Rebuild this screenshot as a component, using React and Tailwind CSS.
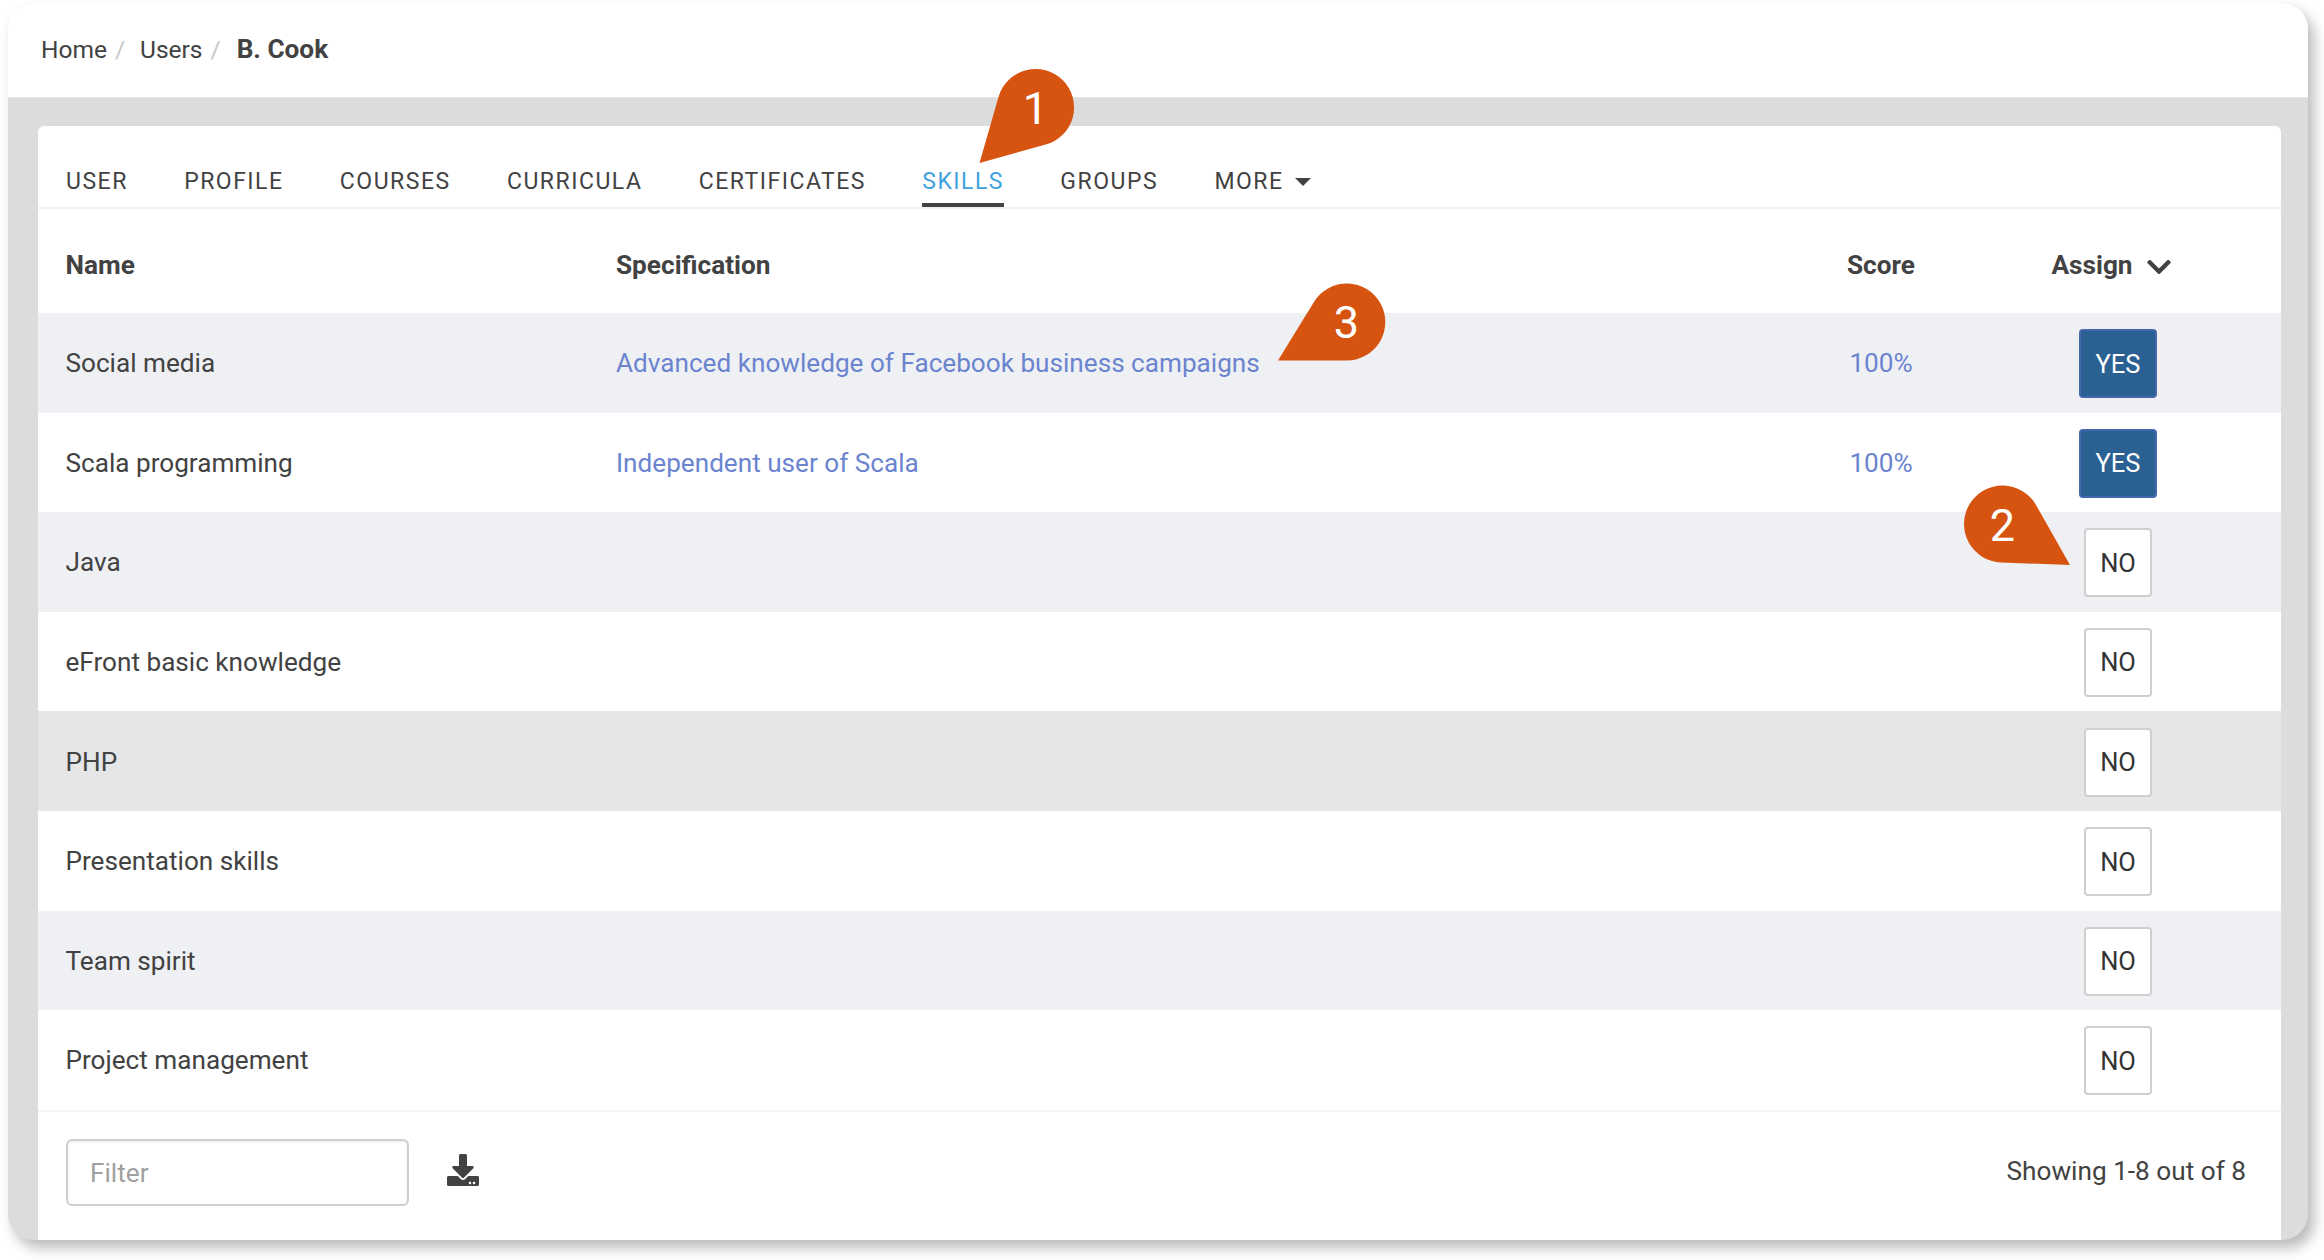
import { FaDownload, FaChevronDown } from 'react-icons/fa';

const tabs = ['USER', 'PROFILE', 'COURSES', 'CURRICULA', 'CERTIFICATES', 'SKILLS', 'GROUPS'];

const rows = [
  { name: 'Social media', spec: 'Advanced knowledge of Facebook business campaigns', score: '100%', assigned: true, bg: 'bg-[#eff0f4]' },
  { name: 'Scala programming', spec: 'Independent user of Scala', score: '100%', assigned: true },
  { name: 'Java', bg: 'bg-[#eff0f4]' },
  { name: 'eFront basic knowledge' },
  { name: 'PHP', bg: 'bg-[#e5e6e8]' },
  { name: 'Presentation skills' },
  { name: 'Team spirit', bg: 'bg-[#eff0f4]' },
  { name: 'Project management' },
];

function Pin({ className, d, label, x, y, w, h }) {
  return (
    <svg className={`absolute ${className}`} width={w} height={h} viewBox={`0 0 ${w} ${h}`}>
      <path d={d} fill="#d65310" />
      <text x={x} y={y} textAnchor="middle" fill="#fff" fontFamily="Roboto, sans-serif" fontSize="45">
        {label}
      </text>
    </svg>
  );
}

function AssignButton({ assigned }) {
  if (assigned) {
    return (
      <button className="w-[78px] h-[69px] rounded-[4px] border-2 border-[#4467ad] bg-[#2a6092] text-white text-[25.5px]">
        YES
      </button>
    );
  }
  return (
    <button className="w-[68px] h-[69px] rounded-[4px] border-2 border-[#cfcfcf] bg-white text-[#333333] text-[25.5px]">
      NO
    </button>
  );
}

export default function App() {
  return (
    <div className="relative w-[2324px] h-[1260px] bg-white pl-2 pt-[3px] font-['Roboto',sans-serif] text-[#424242]">
      <div className="w-[2300px] h-[1237px] rounded-[26px] overflow-hidden bg-[#dcdcdc] shadow-[6px_8px_14px_rgba(0,0,0,0.28)] flex flex-col">
        {/* Breadcrumb */}
        <div className="h-[95px] shrink-0 bg-white border-b border-[#e6e6e6] flex items-center pl-[33px] text-[24.5px]">
          <span>Home</span>
          <span className="ml-2 mr-[15px] text-[#c8c8c8]">/</span>
          <span>Users</span>
          <span className="ml-2 mr-[16px] text-[#c8c8c8]">/</span>
          <span className="font-bold text-[26.2px]">B. Cook</span>
        </div>

        <div className="flex-1 ml-[30px] mr-[27px] mt-[28px] bg-white rounded-t-[6px] flex flex-col">
          {/* Tabs */}
          <div className="h-[83px] shrink-0 border-b-2 border-[#f0f0f0] flex items-end pl-[28px] gap-[56.3px] text-[23px] tracking-[1.5px]">
            {tabs.map(tab => (
              <div
                key={tab}
                className={`h-[46px] pt-[4px] ${tab === 'SKILLS' ? 'text-[#3fa2e0] border-b-4 border-[#424242]' : ''}`}
              >
                {tab}
              </div>
            ))}
            <div className="h-[46px] pt-[4px] flex items-start gap-[11px]">
              MORE
              <span className="mt-[13px] w-0 h-0 border-x-[8px] border-x-transparent border-t-[8px] border-t-[#424242]" />
            </div>
          </div>

          {/* Table header */}
          <div className="h-[104px] shrink-0 flex items-center pl-[27.5px] pt-[10px] text-[26.2px] font-bold">
            <div className="w-[550.5px]">Name</div>
            <div className="flex-1">Specification</div>
            <div className="w-[200px] mr-[-3px] text-center">Score</div>
            <div className="w-[200px] ml-[40px] mr-[63px] flex items-center justify-center gap-[14px] pr-[14px]">
              Assign
              <FaChevronDown className="w-[24px] h-[28px] mt-[3px]" />
            </div>
          </div>

          {/* Rows */}
          {rows.map(row => (
            <div
              key={row.name}
              className={`h-[99.6px] shrink-0 flex items-center pl-[27.5px] pt-[2px] text-[26.15px] ${row.bg || ''}`}
            >
              <div className="w-[550.5px]">{row.name}</div>
              <div className="flex-1 text-[#6b84cf]">{row.spec}</div>
              <div className="w-[200px] mr-[-3px] text-center text-[#6b84cf]">{row.score}</div>
              <div className="w-[200px] ml-[40px] mr-[63px] flex justify-center">
                <AssignButton assigned={row.assigned} />
              </div>
            </div>
          ))}

          {/* Footer */}
          <div className="flex-1 border-t-2 border-[#f4f4f4] flex items-center pl-[28px] pr-[35px] pb-[6px]">
            <input
              placeholder="Filter"
              className="w-[343px] h-[67px] rounded-[6px] border-2 border-[#cfcfcf] px-[22px] text-[26.2px] placeholder:text-[#a0a0a0] shadow-[inset_0_1px_2px_rgba(0,0,0,0.08)]"
            />
            <FaDownload className="ml-[37px] w-[34px] h-[32px] mb-[6px]" />
            <div className="ml-auto text-[26.2px] mb-[2px]">Showing 1-8 out of 8</div>
          </div>
        </div>
      </div>

      {/* Callout pins */}
      <Pin
        className="left-[975px] top-[65px]"
        w={105}
        h={102}
        d="M4.5 98 L23.5 32 A38.5 38.5 0 1 1 70.7 79.6 Z"
        label="1"
        x={60.5}
        y={59}
      />
      <Pin
        className="left-[1960px] top-[482px]"
        w={114}
        h={87}
        d="M110 83 L41 80.5 A38.5 38.5 0 1 1 76 23 Z"
        label="2"
        x={42.5}
        y={58.7}
      />
      <Pin
        className="left-[1273px] top-[280px]"
        w={118}
        h={85}
        d="M5 80.5 L41.1 21.7 A38.5 38.5 0 1 1 74 80.5 Z"
        label="3"
        x={73.5}
        y={57.5}
      />
    </div>
  );
}
